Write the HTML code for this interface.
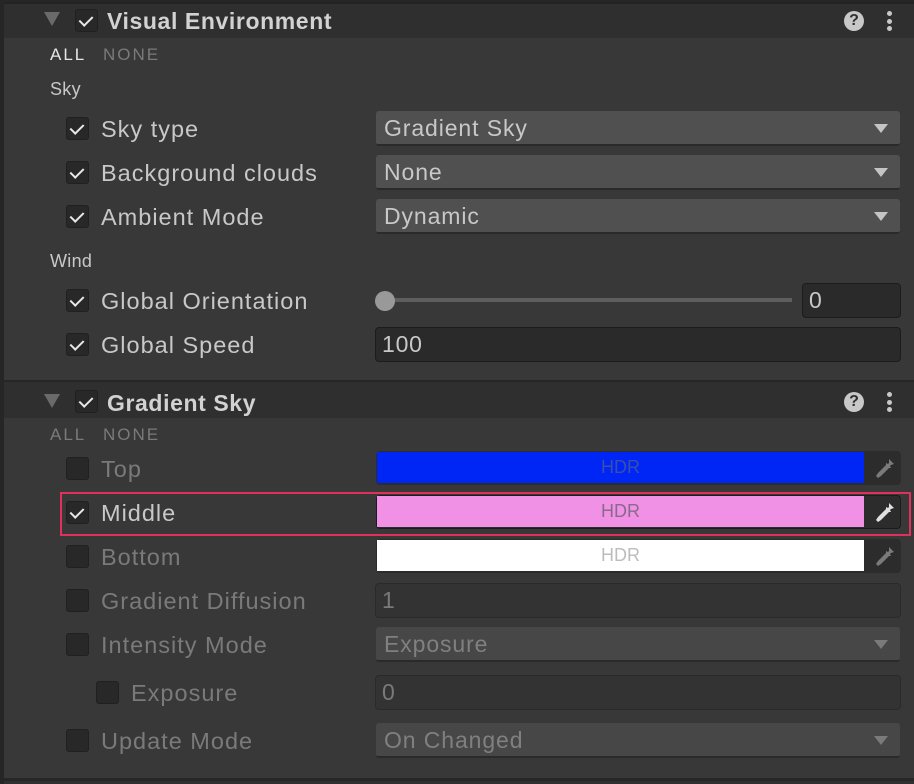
<!DOCTYPE html>
<html><head><meta charset="utf-8"><style>
*{margin:0;padding:0;box-sizing:border-box}
body{width:914px;height:784px;background:#383838;position:relative;overflow:hidden;font-family:"Liberation Sans",sans-serif;color:#c8c8c8}
.a{position:absolute}
.hdr{position:absolute;left:4px;right:0;height:34px;background:#2f2f2f;border-top:2px solid #232323}
.tri{position:absolute;left:44px;width:0;height:0;border-left:8px solid transparent;border-right:8px solid transparent;border-top:14px solid #6a6a6a}
.cb{position:absolute;width:23px;height:23px;background:#282828;border:1px solid #202020;border-radius:3px}
.cb.on::after{content:"";position:absolute;left:6px;top:3px;width:6px;height:11px;border-right:2px solid #e8e8e8;border-bottom:2px solid #e8e8e8;transform:rotate(45deg)}
.title{position:absolute;left:107px;font-weight:bold;font-size:23px;letter-spacing:.6px;color:#d2d2d2}
.lbl{position:absolute;font-size:23.5px;letter-spacing:1px;line-height:26px}
.sm{position:absolute;font-size:17px;letter-spacing:2px}
.small{position:absolute;font-size:18px;letter-spacing:.3px}
.dd{position:absolute;left:376px;width:524px;height:35px;background:#505050;border-radius:3px;border-bottom:2px solid #2a2a2a;font-size:23px;padding:4px 8px;letter-spacing:.9px}
.dd::after{content:"";position:absolute;right:12px;top:13px;border-left:7px solid transparent;border-right:7px solid transparent;border-top:9px solid #c4c4c4}
.dd.dis{background:#474747;color:#808080}
.dd.dis::after{border-top-color:#7a7a7a}
.inp{position:absolute;height:35px;background:#2a2a2a;border:1px solid #1c1c1c;border-radius:4px;font-size:23px;padding:3px 6px;letter-spacing:.8px}
.inp.dis{background:#333;border-color:#2a2a2a;color:#7a7a7a}
.col{position:absolute;left:376px;width:525px;height:34px;background:#2c2c2c;border-radius:4px}
.col .sw{position:absolute;left:1px;top:1px;width:487px;height:31px;font-size:18px;text-align:center;line-height:31px}
.col svg{position:absolute;left:496px;top:6px}
.dis{color:#7a7a7a}
.ic{position:absolute;width:20px;height:20px;border-radius:50%;background:#c8c8c8;color:#2f2f2f;font-weight:bold;font-size:16px;text-align:center;line-height:20px}
.dots{position:absolute;width:5px}
.dots i{display:block;width:5px;height:5px;border-radius:50%;background:#c8c8c8;margin-bottom:2.5px}
</style></head><body>
<div class="a" style="left:0;top:0;width:4px;height:784px;background:#262626"></div>
<div class="a" style="left:0;top:0;width:914px;height:4px;background:#262626"></div>

<div class="hdr" style="top:2px;height:36px"></div>
<div class="tri" style="top:12px"></div>
<div class="cb on" style="left:75px;top:9px"></div>
<div class="title" style="top:8px">Visual Environment</div>
<div class="ic" style="left:844px;top:11px">?</div>
<div class="dots" style="left:887px;top:11px"><i></i><i></i><i></i></div>

<div class="sm" style="left:50px;top:45px;color:#e6e6e6">ALL</div>
<div class="sm" style="left:103px;top:45px;color:#7a7a7a">NONE</div>
<div class="small" style="left:50px;top:79px">Sky</div>

<div class="cb on" style="left:66px;top:117px"></div><div class="lbl" style="left:101px;top:116px">Sky type</div>
<div class="dd" style="top:111px">Gradient Sky</div>
<div class="cb on" style="left:66px;top:161px"></div><div class="lbl" style="left:101px;top:160px">Background clouds</div>
<div class="dd" style="top:155px">None</div>
<div class="cb on" style="left:66px;top:205px"></div><div class="lbl" style="left:101px;top:204px">Ambient Mode</div>
<div class="dd" style="top:199px">Dynamic</div>

<div class="small" style="left:50px;top:251px">Wind</div>
<div class="cb on" style="left:66px;top:289px"></div><div class="lbl" style="left:101px;top:288px">Global Orientation</div>
<div class="a" style="left:384px;top:298px;width:408px;height:4px;background:#5e5e5e"></div>
<div class="a" style="left:375px;top:291px;width:20px;height:20px;border-radius:50%;background:#999"></div>
<div class="inp" style="left:802px;top:283px;width:99px">0</div>
<div class="cb on" style="left:66px;top:333px"></div><div class="lbl" style="left:101px;top:332px">Global Speed</div>
<div class="inp" style="left:375px;top:327px;width:526px">100</div>

<div class="a" style="left:4px;top:380px;width:910px;height:3px;background:#262626"></div>
<div class="hdr" style="top:382px;height:36px;border-top:0"></div>
<div class="tri" style="top:394px"></div>
<div class="cb on" style="left:75px;top:390px"></div>
<div class="title" style="top:390px">Gradient Sky</div>
<div class="ic" style="left:844px;top:392px">?</div>
<div class="dots" style="left:887px;top:392px"><i></i><i></i><i></i></div>

<div class="sm" style="left:50px;top:425px;color:#7a7a7a">ALL</div>
<div class="sm" style="left:103px;top:425px;color:#7a7a7a">NONE</div>

<div class="cb" style="left:66px;top:457px"></div><div class="lbl dis" style="left:101px;top:456px">Top</div>
<div class="col" style="top:451px"><div class="sw" style="background:#0026f5;color:#3a4eaa">HDR</div>
<svg width="24" height="24" viewBox="0 0 24 24"><path d="M17 2l5 5-3 1-1 1 1 2-2 0-8 8-3 2-2-2 2-3 8-8 0-2 2 1 1-1z" fill="#7a7a7a"/></svg></div>

<div class="a" style="left:60px;top:492px;width:851px;height:44px;border:2px solid #e0305c"></div>
<div class="cb on" style="left:66px;top:501px"></div><div class="lbl" style="left:101px;top:500px">Middle</div>
<div class="col" style="top:495px;border:1px solid #1c1c1c"><div class="sw" style="background:#f091e6;color:#8a6a8a;left:0;top:0">HDR</div>
<svg width="24" height="24" viewBox="0 0 24 24" style="top:5px;left:495px"><path d="M17 2l5 5-3 1-1 1 1 2-2 0-8 8-3 2-2-2 2-3 8-8 0-2 2 1 1-1z" fill="#e0e0e0"/></svg></div>

<div class="cb" style="left:66px;top:545px"></div><div class="lbl dis" style="left:101px;top:544px">Bottom</div>
<div class="col" style="top:539px"><div class="sw" style="background:#fff;color:#bdbdbd">HDR</div>
<svg width="24" height="24" viewBox="0 0 24 24"><path d="M17 2l5 5-3 1-1 1 1 2-2 0-8 8-3 2-2-2 2-3 8-8 0-2 2 1 1-1z" fill="#7a7a7a"/></svg></div>

<div class="cb" style="left:66px;top:589px"></div><div class="lbl dis" style="left:101px;top:588px">Gradient Diffusion</div>
<div class="inp dis" style="left:375px;top:583px;width:526px">1</div>
<div class="cb" style="left:66px;top:633px"></div><div class="lbl dis" style="left:101px;top:632px">Intensity Mode</div>
<div class="dd dis" style="top:627px">Exposure</div>
<div class="cb" style="left:96px;top:681px"></div><div class="lbl dis" style="left:131px;top:680px">Exposure</div>
<div class="inp dis" style="left:375px;top:675px;width:526px">0</div>
<div class="cb" style="left:66px;top:729px"></div><div class="lbl dis" style="left:101px;top:728px">Update Mode</div>
<div class="dd dis" style="top:723px">On Changed</div>

<div class="a" style="left:4px;top:778px;width:910px;height:3px;background:#262626"></div>
<div class="a" style="left:4px;top:781px;width:910px;height:3px;background:#2f2f2f"></div>
</body></html>
